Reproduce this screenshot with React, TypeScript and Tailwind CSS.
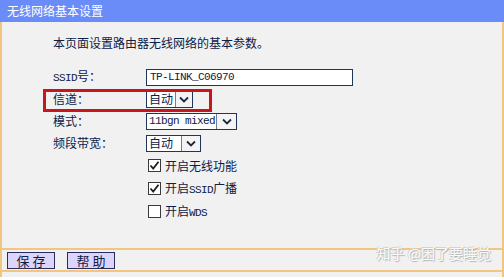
import React from "react";

const M = ({ children }: { children: React.ReactNode }) => (
  <span className="font-['Liberation_Mono',monospace] text-[11px] tracking-[-0.6px]">
    {children}
  </span>
);

const Chevron = () => (
  <svg width="10" height="7" viewBox="0 0 10 7" fill="none">
    <path d="M1 1.5L5 5.5L9 1.5" stroke="#1a2a44" strokeWidth="1.8" />
  </svg>
);

const Select = ({
  width,
  btn,
  children,
}: {
  width: string;
  btn: string;
  children: React.ReactNode;
}) => (
  <div className={`flex h-[17px] border border-[#1f3658] bg-white ${width}`}>
    <div className="flex-1 pl-[2px] flex items-center leading-none">{children}</div>
    <div
      className={`${btn} border-l border-[#6f7f98] bg-[#f4f4f4] flex items-center justify-center`}
    >
      <Chevron />
    </div>
  </div>
);

const Check = ({ checked, children }: { checked: boolean; children: React.ReactNode }) => (
  <div className="h-[23px] pl-[95px] flex items-center gap-[4px]">
    <div className="w-[13px] h-[13px] border border-[#3a3a3a] bg-white flex items-center justify-center">
      {checked && (
        <svg width="11" height="11" viewBox="0 0 11 11" fill="none">
          <path d="M1.5 5.5L4.2 8.5L9.5 1.8" stroke="#1f1f1f" strokeWidth="1.8" />
        </svg>
      )}
    </div>
    <span>{children}</span>
  </div>
);

const App = () => {
  return (
    <div className="relative w-[504px] h-[277px] bg-[#f1f1f1] flex flex-col font-['Noto_Sans_CJK_SC',sans-serif] text-[12px] text-[#0d2045]">
      <div className="h-[22px] bg-[#6a8cf9] text-white text-[12px] pl-[7px] flex items-center">
        无线网络基本设置
      </div>
      <div className="flex-1 border-x-2 border-[#f2c67e] flex flex-col">
        <div className="h-[226px] pl-[51px] pt-[13px]">
          <p className="h-[16px] leading-[16px]">本页面设置路由器无线网络的基本参数。</p>
          <div className="mt-[15px]">
            <div className="h-[22px] flex items-center">
              <div className="w-[93px]">
                <M>SSID</M>号：
              </div>
              <div className="w-[207px] h-[17px] border border-[#1f3658] bg-white pl-[3px] flex items-center">
                <M>TP-LINK_C06970</M>
              </div>
            </div>
            <div className="relative h-[22px] flex items-center">
              <div className="w-[93px]">信道：</div>
              <Select width="w-[47px]" btn="w-[17px]">
                自动
              </Select>
              <div className="absolute left-[-10px] top-[1px] w-[169px] h-[23px] border-[3px] border-[#c8161e]" />
            </div>
            <div className="h-[22px] flex items-center">
              <div className="w-[93px]">模式：</div>
              <Select width="w-[91px]" btn="w-[20px]">
                <M>11bgn mixed</M>
              </Select>
            </div>
            <div className="h-[22px] flex items-center">
              <div className="w-[93px]">频段带宽：</div>
              <Select width="w-[55px]" btn="w-[19px]">
                自动
              </Select>
            </div>
            <Check checked>开启无线功能</Check>
            <Check checked>
              开启<M>SSID</M>广播
            </Check>
            <Check checked={false}>
              开启<M>WDS</M>
            </Check>
          </div>
        </div>
        <div className="h-[24px] border-t-2 border-b-2 border-[#f2c67e] pl-[5px] flex items-center gap-[12px]">
          <button className="w-[48px] h-[17px] bg-[#dcd5fb] border border-[#2b2b5c] text-[13px] leading-none text-[#0d2045]">
            保 存
          </button>
          <button className="w-[48px] h-[17px] bg-[#dcd5fb] border border-[#2b2b5c] text-[13px] leading-none text-[#0d2045]">
            帮 助
          </button>
        </div>
        <div className="flex-1" />
      </div>
      <div className="absolute right-[13px] bottom-[13px] text-[14px] text-[#fafafa] [text-shadow:1px_1px_1px_#b4b4b4,-1px_-1px_0_#d4d4d4]">
        知乎 @困了要睡觉
      </div>
    </div>
  );
};

export default App;
